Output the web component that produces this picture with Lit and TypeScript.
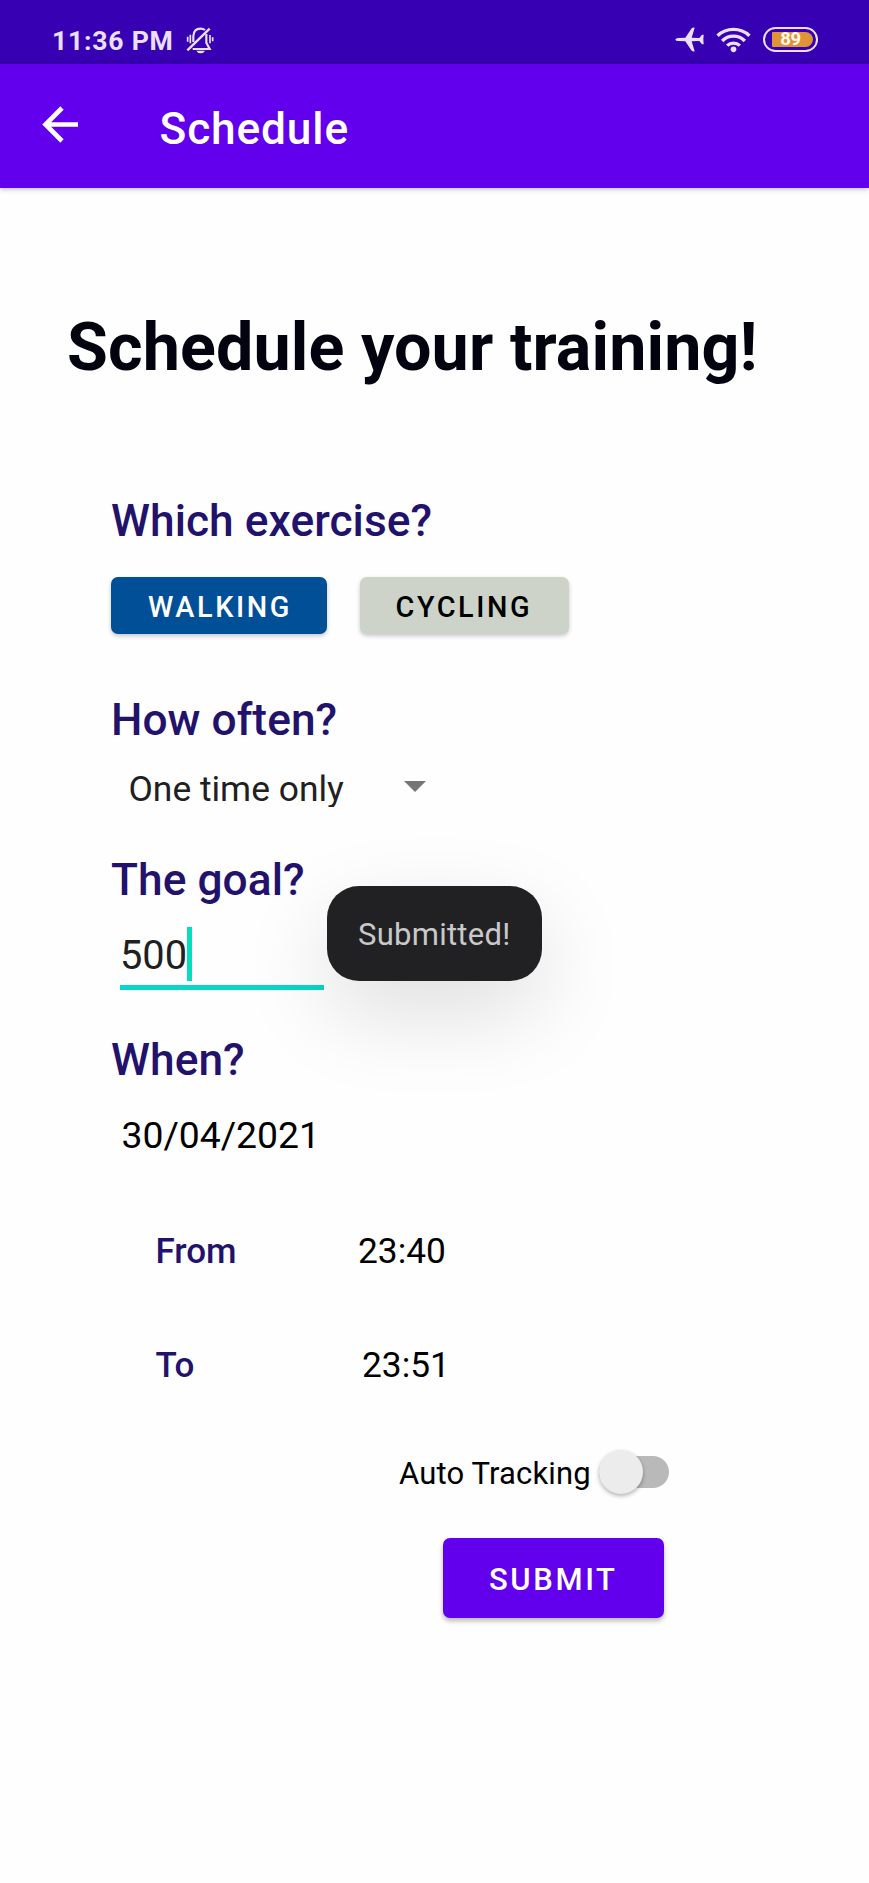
import { LitElement, html, css } from "lit";
import { customElement, property, state } from "lit/decorators.js";
import { classMap } from "lit/directives/class-map.js";

@customElement("status-bar")
class StatusBar extends LitElement {
  static styles = css`
    :host {
      display: flex;
      align-items: center;
      box-sizing: border-box;
      height: 64px;
      padding: 15px 51.500px 0 52px;
      background: #3700b3;
      color: #ebe0fb;
    }
    svg {
      display: block;
      flex: none;
    }
    .time {
      font-size: 26.6px;
      font-weight: 700;
      letter-spacing: 0.75px;
      line-height: 30px;
      padding-top: 3px;
      white-space: nowrap;
    }
    .bell {
      margin-left: 12px;
    }
    .plane {
      margin-left: auto;
      margin-right: 12px;
    }
    .wifi {
      margin-right: 12px;
    }
    .battery {
      box-sizing: border-box;
      width: 55px;
      height: 25px;
      border: 2px solid #ebe0fb;
      border-radius: 13px;
      padding: 3px 3px 3px 7px;
    }
    .charge {
      height: 15px;
      background: #e0943a;
      border-radius: 1px 8px 8px 1px;
      color: #fff8ee;
      font-size: 18.5px;
      font-weight: 700;
      line-height: 15.5px;
      text-align: center;
      padding-right: 3px;
      letter-spacing: -0.3px;
    }
  `;
  render() {
    return html`
      <span class="time">11:36 PM</span>
      <svg class="bell" width="28" height="28" viewBox="76 48 84 84" fill="none" stroke="currentColor" stroke-width="6.500">
        <path d="M98 96V78Q100 56 119 56Q128 56 133 60M137 72V98L147 117H96M137 84V72" />
        <path d="M80 121L147 56" stroke-width="7" />
        <path d="M81 80V95M89 74V100M148 75V100M156 82V94" stroke-width="5" />
        <path d="M107 122H133Q129 130 120 130Q111 130 107 122Z" fill="currentColor" stroke="none" />
      </svg>
      <svg class="plane" width="29" height="25" viewBox="45 36 87 75" fill="currentColor">
        <path
          d="M46 73.500Q47 69 55 69L76 68.500L95 40Q98 37 104 38L95 68.500L118 69L126 59.500L131 59L130 73.500L131 88L126 87.500L118 78L95 78.500L104 109Q98 110 95 107L76 78.500L55 78Q47 78 46 73.500Z"
        />
      </svg>
      <svg class="wifi" width="35" height="26" viewBox="167 35 104 78" fill="none" stroke="currentColor" stroke-width="10" stroke-linecap="butt">
        <path d="M171 61A70 70 0 0 1 267 61M185 77A47 47 0 0 1 253 77M200 91A27 27 0 0 1 238 91" />
        <circle cx="219" cy="102" r="8.500" fill="currentColor" stroke="none" />
      </svg>
      <div class="battery"><div class="charge">89</div></div>
    `;
  }
}

@customElement("app-bar")
class AppBar extends LitElement {
  @property() heading = "";
  static styles = css`
    :host {
      display: flex;
      align-items: center;
      box-sizing: border-box;
      height: 124px;
      padding-left: 42px;
      background: #6200ee;
      color: #fff;
      box-shadow: 0 1px 5px rgba(0, 0, 0, 0.28);
    }
    svg {
      display: block;
      margin-top: -3px;
    }
    .title {
      margin-left: 80.5px;
      padding-top: 6px;
      font-size: 44.25px;
      font-weight: 500;
      letter-spacing: 0.85px;
      line-height: 52px;
    }
  `;
  render() {
    return html`
      <svg width="37" height="37" viewBox="0 0 37 37" fill="none" stroke="currentColor" stroke-width="4.600">
        <path d="M36 18.500H4M20 2L3.500 18.500L20 35" />
      </svg>
      <span class="title">${this.heading}</span>
    `;
  }
}

@customElement("app-root")
class AppRoot extends LitElement {
  @state() private exercise = "Walking";
  @state() private tracking = false;

  static styles = css`
    :host {
      display: block;
      min-height: 1883px;
      background: #fefefe;
      color: #000;
      font-family: Roboto, sans-serif;
    }
    h1 {
      margin: 119px 0 0 67px;
      font-size: 66.4px;
      font-weight: 700;
      line-height: 80px;
      letter-spacing: 0.11px;
      color: #02030f;
      white-space: nowrap;
    }
    .form {
      display: flex;
      flex-direction: column;
      padding: 108px 0 0 111px;
    }
    h2 {
      margin: 0;
      font-size: 44.25px;
      font-weight: 500;
      line-height: 52px;
      letter-spacing: 0.05px;
      color: #22126c;
    }
    button {
      display: block;
      box-sizing: border-box;
      border: 0;
      margin: 0;
      font: 500 28.8px/32px Roboto, sans-serif;
      letter-spacing: 2.6px;
      text-transform: uppercase;
      text-align: left;
      border-radius: 7px;
    }
    .choices {
      display: flex;
      gap: 32.500px;
      margin-top: 30px;
    }
    .choice {
      width: 216px;
      height: 57px;
      padding: 3px 0 0 37px;
      background: #cdd3c9;
      color: #000;
      box-shadow: 0 2px 4px rgba(0, 0, 0, 0.22);
    }
    .choice + .choice {
      width: 209px;
      padding-left: 36px;
    }
    .choice.active {
      background: #014f96;
      color: #fff;
    }
    .often {
      margin-top: 60px;
    }
    .spinner {
      display: flex;
      align-items: center;
      height: 36px;
      overflow: hidden;
      margin-top: 25px;
      padding-left: 17.500px;
      font-size: 35.4px;
      line-height: 36px;
      color: #202020;
    }
    .caret {
      margin: -6px 0 0 60.500px;
    }
    .goal {
      margin-top: 47px;
    }
    .field {
      display: flex;
      box-sizing: border-box;
      width: 204px;
      height: 63px;
      margin: 21px 0 0 9px;
      border-bottom: 5px solid #0bd5c9;
      font-size: 39.8px;
      line-height: 58px;
      color: #202020;
    }
    .cursor {
      width: 4.500px;
      height: 54px;
      background: #06dcc0;
    }
    .when {
      margin-top: 44px;
    }
    .date {
      margin: 27px 0 0 10.500px;
      font-size: 37.3px;
      line-height: 44px;
    }
    .times {
      display: grid;
      grid-template-columns: 202.500px auto;
      row-gap: 72px;
      margin: 73px 0 0 44.500px;
      font-size: 35.3px;
      line-height: 42px;
    }
    .name {
      font-weight: 500;
      font-size: 35px;
      padding-top: 1px;
      margin-bottom: -1px;
      color: #22126c;
    }
    .late {
      padding-left: 4px;
    }
    .tracking {
      display: flex;
      align-items: center;
      height: 50px;
      margin: 61px 0 0 288px;
      font-size: 31px;
      letter-spacing: 0.15px;
    }
    .tracking-label {
      padding-top: 3px;
    }
    .track {
      display: flex;
      align-items: center;
      width: 70px;
      height: 32px;
      margin-left: 8.500px;
      border-radius: 16px;
      background: #b9b9b9;
    }
    .thumb {
      width: 44px;
      height: 44px;
      flex: none;
      border-radius: 50%;
      background: #ececec;
      box-shadow: 0 2px 4px rgba(0, 0, 0, 0.3);
    }
    .track.on {
      justify-content: flex-end;
    }
    .submit {
      width: 221px;
      height: 80px;
      margin: 41px 0 0 332px;
      padding: 3px 0 0 46px;
      font-size: 31px;
      background: #6200ee;
      color: #fff;
      box-shadow: 0 3px 5px rgba(0, 0, 0, 0.28);
    }
    .toast {
      position: absolute;
      left: 327px;
      top: 886px;
      display: flex;
      align-items: center;
      justify-content: center;
      box-sizing: border-box;
      width: 214.500px;
      height: 95px;
      padding-top: 2px;
      border-radius: 32px;
      background: #212123;
      color: #c9c9c9;
      font-size: 31px;
      letter-spacing: 0.25px;
      box-shadow: 0 32px 88px rgba(0, 0, 0, 0.13);
    }
  `;

  render() {
    return html`
      <status-bar></status-bar>
      <app-bar heading="Schedule"></app-bar>
      <h1>Schedule your training!</h1>
      <div class="form">
        <h2>Which exercise?</h2>
        <div class="choices">
          ${["Walking", "Cycling"].map(
            (name) => html`<button
              class=${classMap({ choice: true, active: this.exercise === name })}
              @click=${() => (this.exercise = name)}
            >${name}</button>`
          )}
        </div>
        <h2 class="often">How often?</h2>
        <div class="spinner">
          <span>One time only</span>
          <svg class="caret" width="22" height="11" viewBox="0 0 22 11"><path d="M0 0H22L11 11Z" fill="#757575" /></svg>
        </div>
        <h2 class="goal">The goal?</h2>
        <div class="field"><span>500</span><span class="cursor"></span></div>
        <h2 class="when">When?</h2>
        <div class="date">30/04/2021</div>
        <div class="times">
          <span class="name">From</span><span>23:40</span>
          <span class="name">To</span><span class="late">23:51</span>
        </div>
        <div class="tracking">
          <span class="tracking-label">Auto Tracking</span>
          <div
            class=${classMap({ track: true, on: this.tracking })}
            @click=${() => (this.tracking = !this.tracking)}
          ><div class="thumb"></div></div>
        </div>
        <button class="submit">Submit</button>
      </div>
      <div class="toast">Submitted!</div>
    `;
  }
}
